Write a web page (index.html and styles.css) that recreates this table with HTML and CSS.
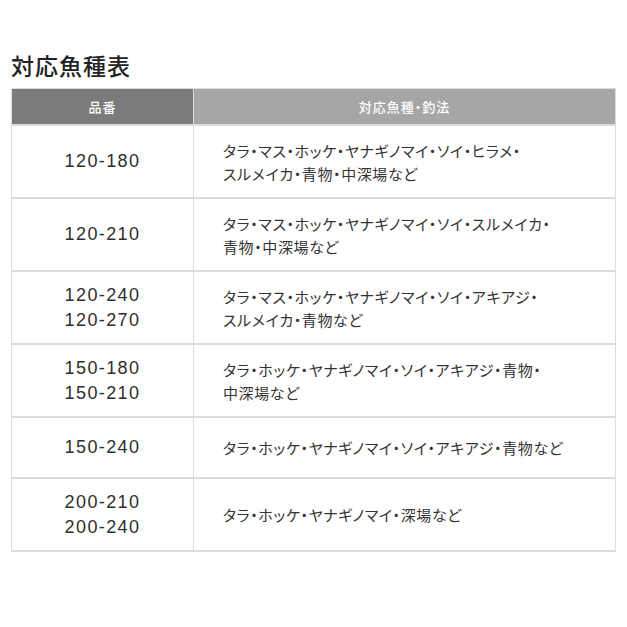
FILE: index.html
```html
<!DOCTYPE html>
<html lang="ja">
<head>
<meta charset="utf-8">
<link rel="stylesheet" href="styles.css">
</head>
<body>
<div class="page">
  <h2 class="title">対応魚種表</h2>
  <table class="fish-table">
    <thead>
      <tr>
        <th class="col-model">品番</th>
        <th class="col-fish">対応魚種・釣法</th>
      </tr>
    </thead>
    <tbody>
      <tr class="row-tall">
        <td class="model">120-180</td>
        <td class="fish">タラ・マス・ホッケ・ヤナギノマイ・ソイ・ヒラメ・<br>スルメイカ・青物・中深場など</td>
      </tr>
      <tr class="row-tall">
        <td class="model">120-210</td>
        <td class="fish">タラ・マス・ホッケ・ヤナギノマイ・ソイ・スルメイカ・<br>青物・中深場など</td>
      </tr>
      <tr class="row-tall">
        <td class="model">120-240<br>120-270</td>
        <td class="fish">タラ・マス・ホッケ・ヤナギノマイ・ソイ・アキアジ・<br>スルメイカ・青物など</td>
      </tr>
      <tr class="row-tall">
        <td class="model">150-180<br>150-210</td>
        <td class="fish">タラ・ホッケ・ヤナギノマイ・ソイ・アキアジ・青物・<br>中深場など</td>
      </tr>
      <tr class="row-short">
        <td class="model">150-240</td>
        <td class="fish">タラ・ホッケ・ヤナギノマイ・ソイ・アキアジ・青物など</td>
      </tr>
      <tr class="row-tall">
        <td class="model">200-210<br>200-240</td>
        <td class="fish">タラ・ホッケ・ヤナギノマイ・深場など</td>
      </tr>
    </tbody>
  </table>
</div>
</body>
</html>
```
FILE: styles.css
```css
html, body {
  margin: 0;
  padding: 0;
  background: #fff;
}
body {
  font-family: "Noto Sans CJK JP", sans-serif;
  color: #333;
}
.page {
  padding: 49px 11px 0 11px;
}
.title {
  margin: 0 0 6px 0;
  font-size: 23px;
  line-height: 33px;
  font-weight: 500;
  color: #222;
  letter-spacing: 1px;
}
.fish-table {
  width: 605px;
  border-collapse: collapse;
  table-layout: fixed;
}
.fish-table th {
  height: 35px;
  padding: 0;
  color: #fff;
  font-size: 13px;
  font-weight: 500;
  text-align: center;
  border: 1px solid #dcdcdc;
  letter-spacing: 1px;
  font-feature-settings: "palt";
}
.col-model {
  width: 181px;
  background: #7b7b7b;
}
.col-fish {
  background: #a6a6a6;
}
.fish-table td {
  padding: 0;
  border: 1px solid #dcdcdc;
  border-width: 2px 1px;
  vertical-align: middle;
}
.row-tall td {
  height: 71px;
}
.row-short td {
  height: 59px;
}
.model {
  text-align: center;
  font-family: "Liberation Sans", "Noto Sans CJK JP", sans-serif;
  font-size: 18px;
  line-height: 25px;
  letter-spacing: 1.4px;
  color: #2e2e2e;
}
.fish {
  padding-left: 29px !important;
  font-size: 15px;
  line-height: 23px;
  letter-spacing: 0.6px;
  color: #333;
  font-feature-settings: "palt";
}
```
